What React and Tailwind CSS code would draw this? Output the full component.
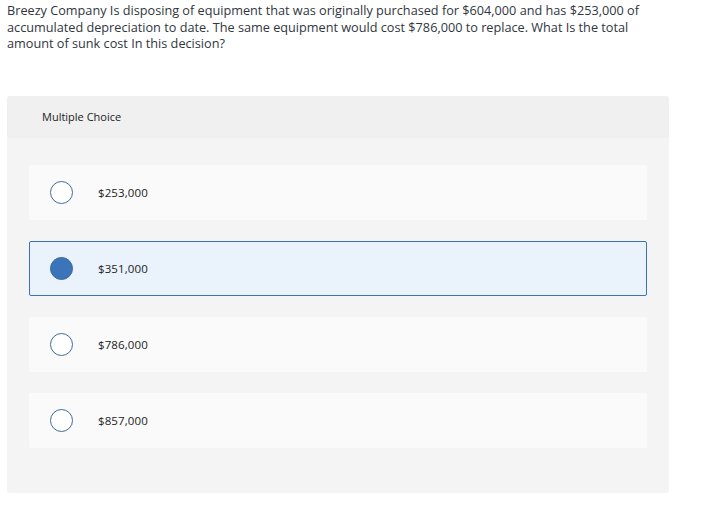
export default function App() {
  const options = ["$253,000", "$351,000", "$786,000", "$857,000"];
  const selected = 1;
  return (
    <div className="w-[724px] h-[507px] bg-white" style={{ fontFamily: "'Open Sans', Lato, sans-serif" }}>
      <p className="w-[652px] px-[7px] pt-[2px] text-[12.7px] leading-[16.7px] text-[#2f3640]">
        Breezy Company Is disposing of equipment that was originally purchased for $604,000 and has $253,000 of accumulated depreciation to date. The same equipment would cost $786,000 to replace. What Is the total amount of sunk cost In this decision?
      </p>
      <div className="mt-[44px] ml-[7px] w-[662px] rounded-[3px] overflow-hidden bg-[#f4f4f4]">
        <div className="h-[42px] bg-[#f0f0f0] flex items-center pl-[35px] text-[11px] text-[#222]">
          Multiple Choice
        </div>
        <div className="pt-[27px] pb-[45px] px-[22px] flex flex-col gap-[21px]">
          {options.map((o, i) => (
            <div
              key={o}
              className={
                i === selected
                  ? "h-[55px] rounded-[2px] border border-[#3d72b4] bg-[#eaf2fb] flex items-center pl-[20px]"
                  : "h-[55px] rounded-[2px] bg-[#fafafa] flex items-center pl-[21px]"
              }
            >
              {i === selected ? (
                <span className="w-[23px] h-[23px] rounded-full bg-[#3b74b9] border border-[#3a6aa3]" />
              ) : (
                <span className="w-[23px] h-[23px] rounded-full border-[1.5px] border-[#3e6c9c] bg-white" />
              )}
              <span className="ml-[25px] text-[11.5px] tracking-[0.1px] text-[#222]">{o}</span>
            </div>
          ))}
        </div>
      </div>
    </div>
  );
}
